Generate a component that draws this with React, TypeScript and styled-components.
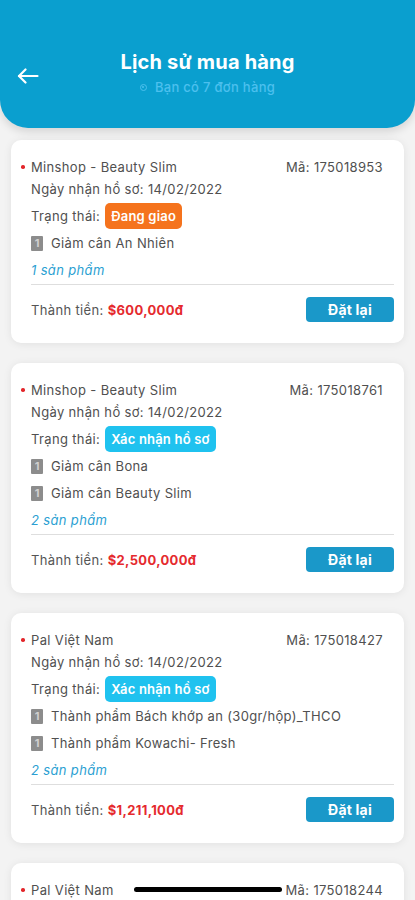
import React from "react";
import styled, { createGlobalStyle } from "styled-components";

const Global = createGlobalStyle`
  html, body { margin: 0; padding: 0; background: #f3f3f3; }
  body { font-family: Inter, "Noto Sans", sans-serif; -webkit-font-smoothing: antialiased; }
  * { box-sizing: border-box; }
`;

const Page = styled.div`
  min-height: 900px;
  background: #f3f3f3;
  padding-bottom: 40px;
`;

const Header = styled.header`
  height: 128px;
  background: #0a9fcf;
  border-radius: 0 0 28px 28px;
  box-shadow: 0 4px 8px rgba(0, 0, 0, 0.12);
  display: grid;
  grid-template-columns: 56px 1fr 56px;
  align-items: center;
  padding-top: 42px;
  padding-bottom: 24px;
`;

const BackButton = styled.div`
  display: flex;
  align-items: center;
  justify-content: flex-start;
  padding-left: 17px;
  padding-top: 6px;
`;

const TitleBlock = styled.div`
  display: flex;
  flex-direction: column;
  align-items: center;
  gap: 4px;
`;

const Title = styled.h1`
  margin: 0;
  font-size: 20px;
  line-height: 24px;
  font-weight: 700;
  letter-spacing: 0.2px;
  color: #ffffff;
`;

const Subtitle = styled.div`
  display: flex;
  align-items: center;
  gap: 8px;
  font-size: 13px;
  line-height: 18px;
  letter-spacing: 0.3px;
  color: #4cc0ee;
  font-weight: 500;
`;

const SubDot = styled.span`
  width: 7px;
  height: 7px;
  border-radius: 50%;
  border: 1.5px solid #4cc0ee;
  display: inline-block;
  position: relative;
  &::after {
    content: "";
    position: absolute;
    left: 1px;
    top: 1px;
    width: 2px;
    height: 2px;
    border-radius: 50%;
    background: #4cc0ee;
  }
`;

const List = styled.div`
  display: flex;
  flex-direction: column;
  gap: 20px;
  padding: 12px 11px 0;
`;

const Card = styled.div`
  background: #fff;
  border-radius: 10px;
  box-shadow: 0 1px 8px rgba(0, 0, 0, 0.08);
  padding: 18px 10px 21px 20px;
  color: #505050;
  font-size: 13px;
  letter-spacing: 0.35px;
`;

const TopRow = styled.div`
  display: flex;
  justify-content: space-between;
  align-items: center;
  line-height: 18px;
  position: relative;
  &::before {
    content: "";
    position: absolute;
    left: -10px;
    top: 7px;
    width: 3.5px;
    height: 3.5px;
    border-radius: 50%;
    background: #e3262b;
  }
`;

const Code = styled.span`
  padding-right: 11px;
`;

const Line = styled.div<{ $mt?: number }>`
  line-height: 18px;
  margin-top: ${(p) => p.$mt ?? 4}px;
`;

const StatusRow = styled.div`
  display: flex;
  align-items: center;
  gap: 5px;
  margin-top: 5px;
  height: 26px;
`;

const Badge = styled.span<{ $color: string }>`
  background: ${(p) => p.$color};
  color: #fff;
  font-weight: 600;
  font-size: 13px;
  letter-spacing: 0.2px;
  height: 26px;
  line-height: 26px;
  padding: 0 6px;
  border-radius: 5px;
`;

const ItemRow = styled.div<{ $first?: boolean }>`
  display: flex;
  align-items: center;
  gap: 8px;
  height: 18px;
  margin-top: ${(p) => (p.$first ? 5 : 9)}px;
`;

const Qty = styled.span`
  width: 12px;
  height: 15px;
  background: #8c8c8c;
  color: #cfcfcf;
  font-size: 11px;
  font-weight: 700;
  letter-spacing: 0;
  display: flex;
  align-items: center;
  justify-content: center;
  border-radius: 1px;
`;

const Count = styled.div`
  margin-top: 9px;
  line-height: 18px;
  font-style: italic;
  color: #2b9fd2;
`;

const Divider = styled.div`
  margin-top: 5px;
  height: 1px;
  background: #dedede;
`;

const Footer = styled.div`
  margin-top: 12px;
  display: flex;
  justify-content: space-between;
  align-items: center;
`;

const Total = styled.span`
  color: #555;
`;

const Price = styled.span`
  color: #e52a2e;
  font-weight: 700;
`;

const Reorder = styled.button`
  width: 88px;
  height: 25px;
  border: none;
  border-radius: 4px;
  background: #1a98c9;
  color: #fff;
  font-family: inherit;
  font-size: 14px;
  font-weight: 700;
  letter-spacing: 0.2px;
  padding: 0;
`;

const HomeIndicator = styled.div`
  position: fixed;
  left: 134px;
  bottom: 8px;
  width: 148px;
  height: 5px;
  border-radius: 3px;
  background: #000;
`;

type Order = {
  shop: string;
  code: string;
  status: "ship" | "confirm";
  items: string[];
  total: string;
};

const orders: Order[] = [
  { shop: "Minshop - Beauty Slim", code: "175018953", status: "ship", items: ["Giảm cân An Nhiên"], total: "$600,000đ" },
  { shop: "Minshop - Beauty Slim", code: "175018761", status: "confirm", items: ["Giảm cân Bona", "Giảm cân Beauty Slim"], total: "$2,500,000đ" },
  { shop: "Pal Việt Nam", code: "175018427", status: "confirm", items: ["Thành phẩm Bách khớp an (30gr/hộp)_THCO", "Thành phẩm Kowachi- Fresh"], total: "$1,211,100đ" },
  { shop: "Pal Việt Nam", code: "175018244", status: "confirm", items: ["Thành phẩm Kowachi- Fresh"], total: "$450,000đ" },
];

export default function App() {
  return (
    <Page>
      <Global />
      <Header>
        <BackButton>
          <svg width="22" height="16" viewBox="0 0 22 16" fill="none" stroke="#fff" strokeWidth="2.2" strokeLinecap="round" strokeLinejoin="round">
            <path d="M20.5 8H2" />
            <path d="M8.5 1.5L2 8l6.5 6.5" />
          </svg>
        </BackButton>
        <TitleBlock>
          <Title>Lịch sử mua hàng</Title>
          <Subtitle>
            <SubDot />
            Bạn có 7 đơn hàng
          </Subtitle>
        </TitleBlock>
        <div />
      </Header>
      <List>
        {orders.map((o) => (
          <Card key={o.code}>
            <TopRow>
              <span>{o.shop}</span>
              <Code>Mã: {o.code}</Code>
            </TopRow>
            <Line>Ngày nhận hồ sơ: 14/02/2022</Line>
            <StatusRow>
              <span>Trạng thái:</span>
              {o.status === "ship" ? (
                <Badge $color="#f5731d">Đang giao</Badge>
              ) : (
                <Badge $color="#1fc2ef">Xác nhận hồ sơ</Badge>
              )}
            </StatusRow>
            {o.items.map((it, i) => (
              <ItemRow key={it} $first={i === 0}>
                <Qty>1</Qty>
                <span>{it}</span>
              </ItemRow>
            ))}
            <Count>{o.items.length} sản phẩm</Count>
            <Divider />
            <Footer>
              <Total>
                Thành tiền: <Price>{o.total}</Price>
              </Total>
              <Reorder>Đặt lại</Reorder>
            </Footer>
          </Card>
        ))}
      </List>
      <HomeIndicator />
    </Page>
  );
}
